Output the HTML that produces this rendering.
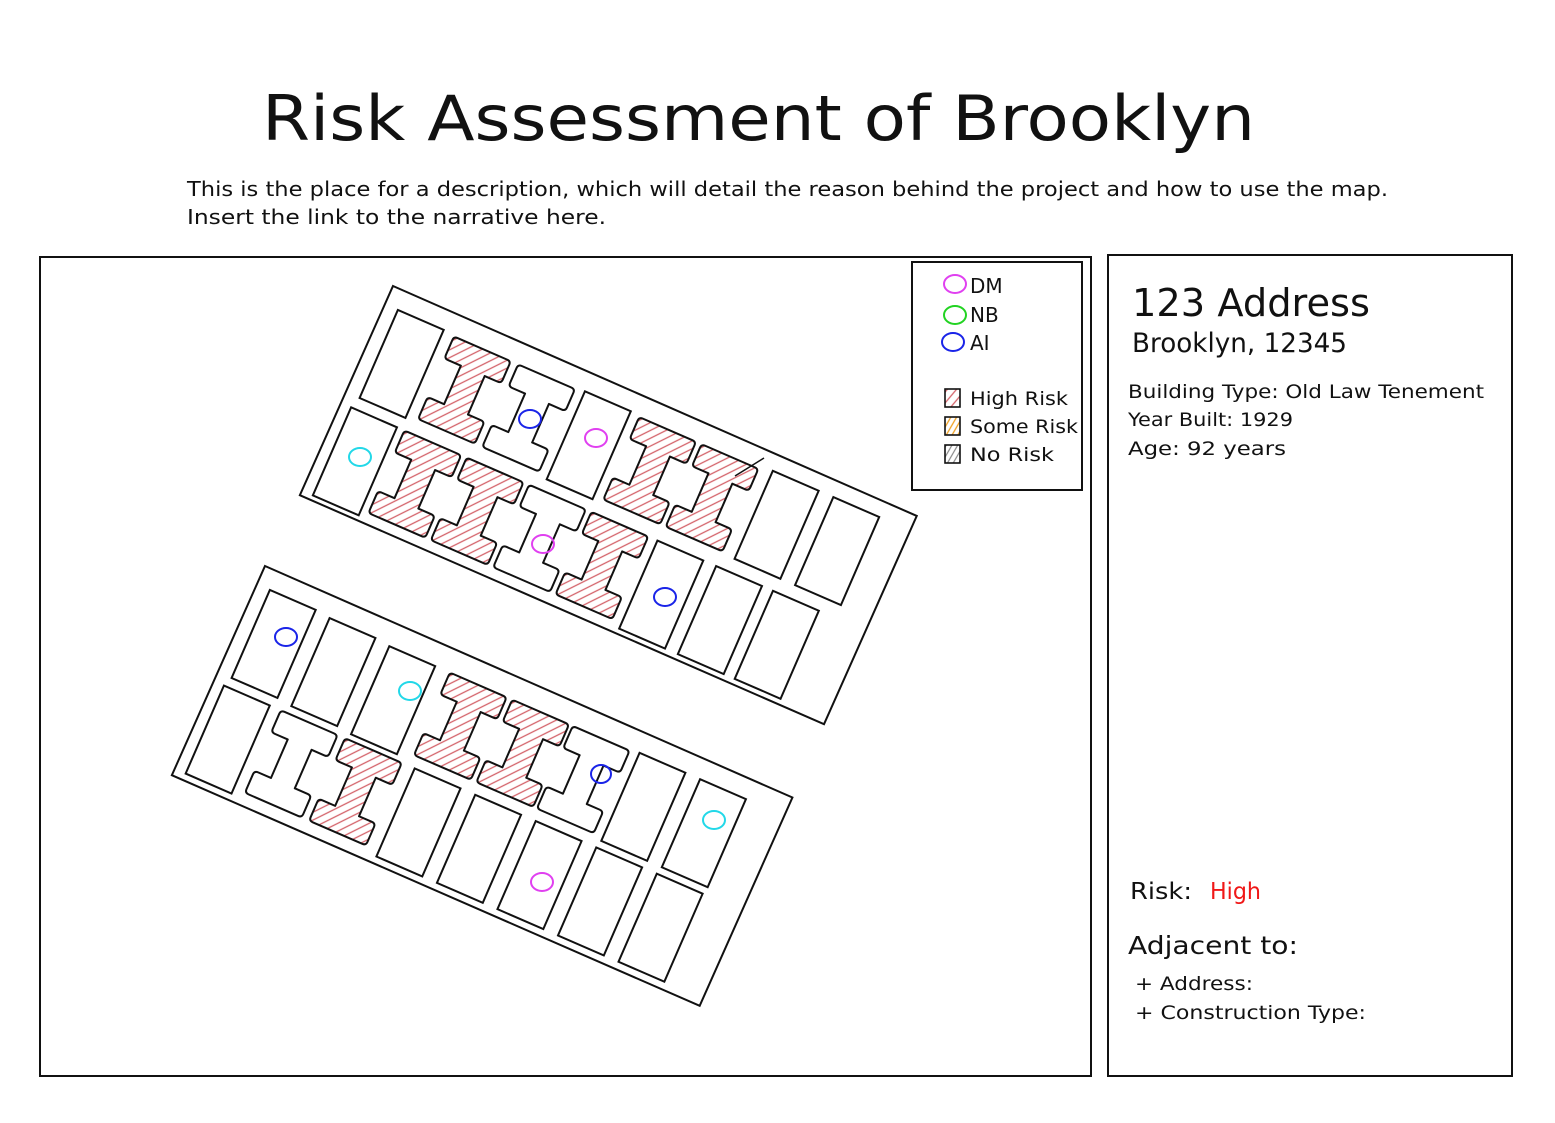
<!DOCTYPE html>
<html><head><meta charset="utf-8"><style>
html,body{margin:0;padding:0;background:#fff;}
svg{display:block;}
text{font-family:"DejaVu Sans","Liberation Sans",sans-serif;fill:#111;}
</style></head><body>
<svg width="1555" height="1123" viewBox="0 0 1555 1123" xmlns="http://www.w3.org/2000/svg">
<defs>
<pattern id="h" patternUnits="userSpaceOnUse" width="7" height="7" patternTransform="rotate(-50)">
<line x1="0" y1="3" x2="7" y2="3" stroke="#d4636a" stroke-width="1.3"/>
</pattern>
<pattern id="ho" patternUnits="userSpaceOnUse" width="5" height="5" patternTransform="rotate(-60)">
<line x1="0" y1="2" x2="5" y2="2" stroke="#f0a020" stroke-width="1.3"/>
</pattern>
<pattern id="hg" patternUnits="userSpaceOnUse" width="5" height="5" patternTransform="rotate(-60)">
<line x1="0" y1="2" x2="5" y2="2" stroke="#888" stroke-width="1.2"/>
</pattern>
<path id="I" d="M4,0 H58 Q62,0 62,4 V20 Q62,24 58,24 H44 V66 H58 Q62,66 62,70 V86 Q62,90 58,90 H4 Q0,90 0,86 V70 Q0,66 4,66 H18 V24 H4 Q0,24 0,20 V4 Q0,0 4,0 Z" stroke-linejoin="round"/>
</defs>
<g fill="none" stroke="#111" stroke-width="2">

<text x="262" y="140" font-size="62" textLength="993" lengthAdjust="spacingAndGlyphs" stroke="none">Risk Assessment of Brooklyn</text>
<text x="187" y="196" font-size="20" textLength="1201" lengthAdjust="spacingAndGlyphs" stroke="none">This is the place for a description, which will detail the reason behind the project and how to use the map.</text>
<text x="187" y="224" font-size="20" textLength="419" lengthAdjust="spacingAndGlyphs" stroke="none">Insert the link to the narrative here.</text>

<rect x="40" y="257" width="1051" height="819"/>
<rect x="1108" y="255" width="404" height="821"/>
<rect x="912" y="262" width="170" height="228"/>

<!-- legend -->
<ellipse cx="955" cy="284" rx="11" ry="9" stroke="#e040f0"/>
<ellipse cx="955" cy="315" rx="11" ry="9" stroke="#22d322"/>
<ellipse cx="953" cy="342" rx="11" ry="9" stroke="#1a24e8"/>
<text x="970" y="293" font-size="20" stroke="none">DM</text>
<text x="970" y="322" font-size="20" stroke="none">NB</text>
<text x="970" y="350" font-size="20" stroke="none">AI</text>
<rect x="945" y="389" width="15" height="18" fill="url(#h)" stroke-width="1.6"/>
<rect x="945" y="417" width="15" height="18" fill="url(#ho)" stroke-width="1.6"/>
<rect x="945" y="445" width="15" height="18" fill="url(#hg)" stroke-width="1.6"/>
<text x="970" y="405" font-size="19" textLength="98" lengthAdjust="spacingAndGlyphs" stroke="none">High Risk</text>
<text x="970" y="433" font-size="19" textLength="108" lengthAdjust="spacingAndGlyphs" stroke="none">Some Risk</text>
<text x="970" y="461" font-size="19" textLength="84" lengthAdjust="spacingAndGlyphs" stroke="none">No Risk</text>

<!-- info panel -->
<text x="1132" y="316" font-size="38" textLength="238" lengthAdjust="spacingAndGlyphs" stroke="none">123 Address</text>
<text x="1132" y="352" font-size="27" textLength="215" lengthAdjust="spacingAndGlyphs" stroke="none">Brooklyn, 12345</text>
<text x="1128" y="398" font-size="19" textLength="356" lengthAdjust="spacingAndGlyphs" stroke="none">Building Type: Old Law Tenement</text>
<text x="1128" y="426" font-size="19" textLength="165" lengthAdjust="spacingAndGlyphs" stroke="none">Year Built: 1929</text>
<text x="1128" y="455" font-size="19" textLength="158" lengthAdjust="spacingAndGlyphs" stroke="none">Age: 92 years</text>
<text x="1130" y="899" font-size="23" textLength="62" lengthAdjust="spacingAndGlyphs" stroke="none">Risk:</text>
<text x="1210" y="899" font-size="23" textLength="51" lengthAdjust="spacingAndGlyphs" stroke="none" style="fill:#f01818">High</text>
<text x="1128" y="954" font-size="25" textLength="170" lengthAdjust="spacingAndGlyphs" stroke="none">Adjacent to:</text>
<text x="1135" y="990" font-size="19" textLength="118" lengthAdjust="spacingAndGlyphs" stroke="none">+ Address:</text>
<text x="1135" y="1019" font-size="19" textLength="231" lengthAdjust="spacingAndGlyphs" stroke="none">+ Construction Type:</text>

<!-- top block -->
<g transform="translate(393,286) rotate(23.5)">
<path d="M0,0 L572,2 L570,230 L-2,229 Z"/>
<rect x="14" y="20" width="50" height="96"/>
<use href="#I" x="76" y="22" fill="url(#h)"/>
<use href="#I" x="146" y="22" fill="#fff"/>
<rect x="218" y="20" width="50" height="96"/>
<use href="#I" x="278" y="22" fill="url(#h)"/>
<use href="#I" x="346" y="22" fill="url(#h)"/>
<rect x="422" y="18" width="50" height="96"/>
<rect x="488" y="18" width="50" height="96"/>
<rect x="10" y="128" width="50" height="96"/>
<use href="#I" x="68" y="128" fill="url(#h)"/>
<use href="#I" x="136" y="128" fill="url(#h)"/>
<use href="#I" x="204" y="128" fill="#fff"/>
<use href="#I" x="272" y="128" fill="url(#h)"/>
<rect x="344" y="128" width="50" height="96"/>
<rect x="408" y="128" width="50" height="96"/>
<rect x="470" y="128" width="50" height="96"/>
</g>

<!-- bottom block -->
<g transform="translate(265,566) rotate(23.5)">
<path d="M0,0 L576,2 L574,230 L-2,229 Z"/>
<rect x="14" y="20" width="50" height="96"/>
<rect x="80" y="22" width="50" height="96"/>
<rect x="146" y="24" width="50" height="96"/>
<use href="#I" x="212" y="24" fill="url(#h)"/>
<use href="#I" x="280" y="24" fill="url(#h)"/>
<use href="#I" x="346" y="24" fill="#fff"/>
<rect x="418" y="22" width="50" height="96"/>
<rect x="484" y="22" width="50" height="96"/>
<rect x="10" y="126" width="50" height="96"/>
<use href="#I" x="72" y="126" fill="#fff"/>
<use href="#I" x="142" y="126" fill="url(#h)"/>
<rect x="218" y="126" width="50" height="96"/>
<rect x="284" y="126" width="50" height="96"/>
<rect x="350" y="126" width="50" height="96"/>
<rect x="416" y="126" width="50" height="96"/>
<rect x="482" y="126" width="50" height="96"/>
</g>

<g stroke-width="2">
<ellipse cx="530" cy="419" rx="11" ry="9" stroke="#1a24e8"/>
<ellipse cx="596" cy="438" rx="11" ry="9" stroke="#e040f0"/>
<ellipse cx="360" cy="457" rx="11" ry="9" stroke="#22d8e8"/>
<ellipse cx="543" cy="544" rx="11" ry="9" stroke="#e040f0"/>
<ellipse cx="665" cy="597" rx="11" ry="9" stroke="#1a24e8"/>
<ellipse cx="286" cy="637" rx="11" ry="9" stroke="#1a24e8"/>
<ellipse cx="410" cy="691" rx="11" ry="9" stroke="#22d8e8"/>
<ellipse cx="601" cy="774" rx="10" ry="9" stroke="#1a24e8"/>
<ellipse cx="714" cy="820" rx="11" ry="9" stroke="#22d8e8"/>
<ellipse cx="542" cy="882" rx="11" ry="9" stroke="#e040f0"/>
</g>
<path d="M735,476 L764,458" stroke-width="1.5"/>
</g>
</svg>
</body></html>
